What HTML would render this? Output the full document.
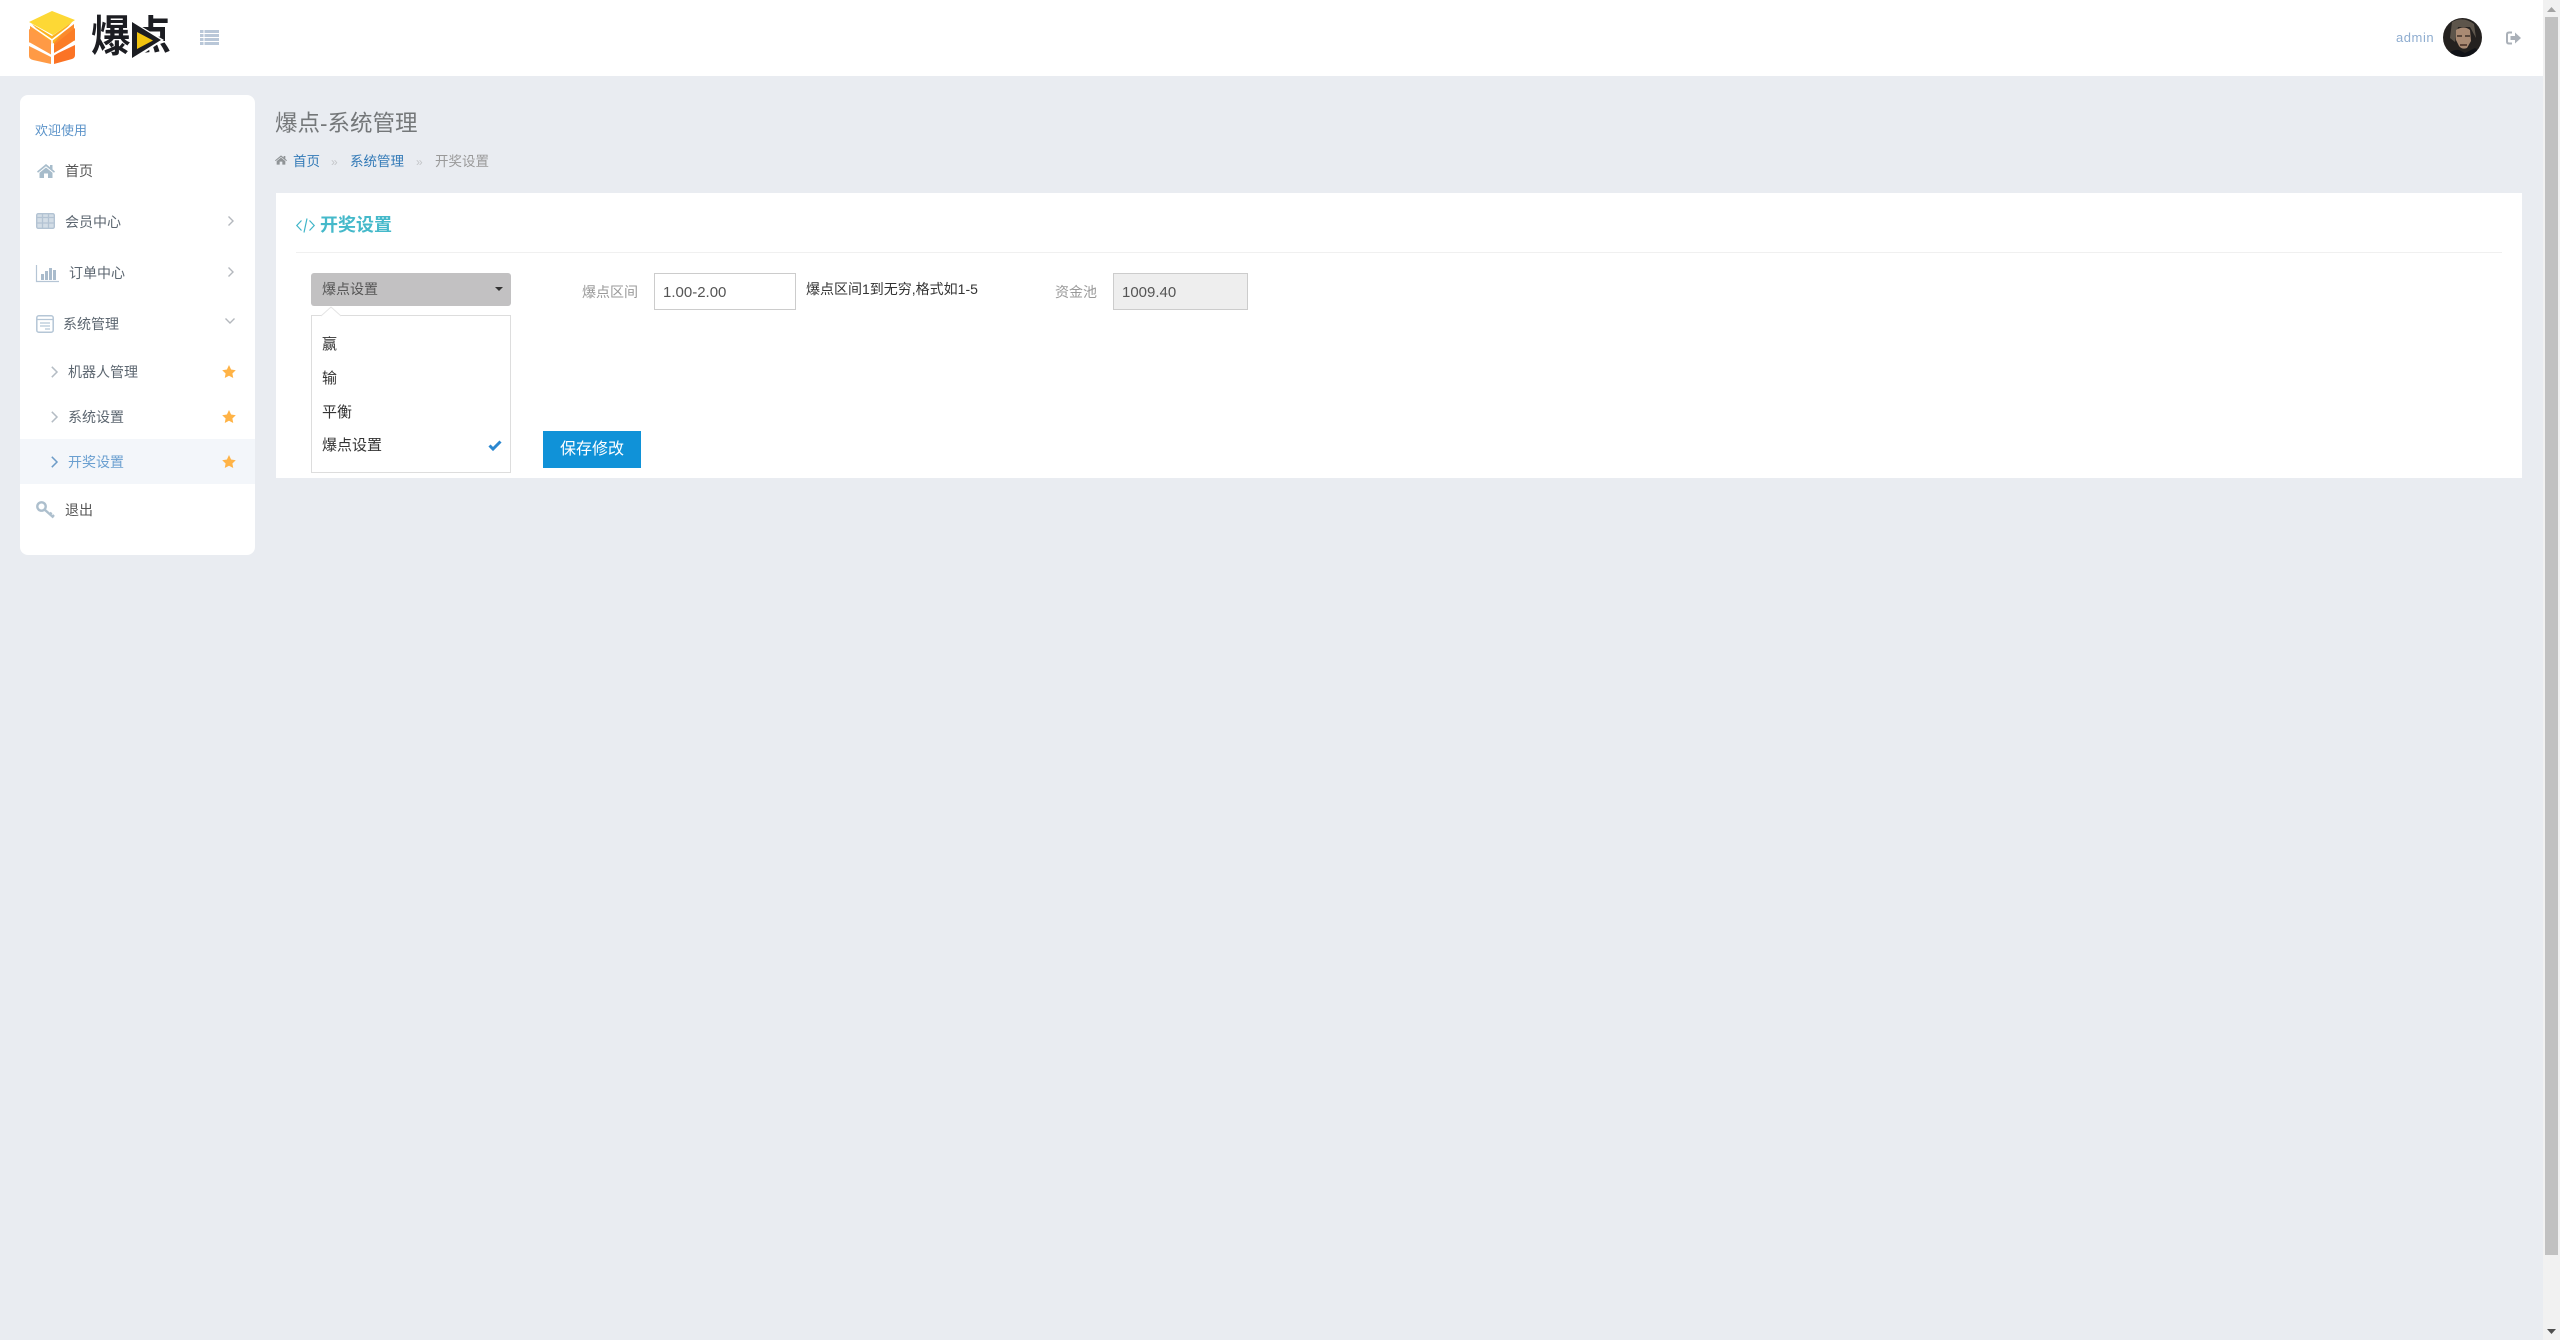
<!DOCTYPE html>
<html lang="zh"><head><meta charset="utf-8"><title>爆点-系统管理</title>
<style>
html,body{margin:0;padding:0;width:2560px;height:1340px;overflow:hidden;background:#e9ecf1;font-family:"Liberation Sans","Noto Sans CJK SC",sans-serif;color:#676a6c}
.a{position:absolute}
.t{position:absolute;white-space:nowrap;line-height:20px;font-size:14px}
svg{position:absolute;overflow:visible}
</style></head><body>
<!-- header -->
<div class="a" style="left:0;top:0;width:2543px;height:76px;background:#fff"></div>
<svg style="left:28px;top:10px" width="48" height="54" viewBox="0 0 48 54">
<path d="M1 12 24 1 47 10 25 25Z" fill="#fdd835"/>
<path d="M2 15 23 29V35L2 21Z" fill="#ff9d3c"/><path d="M46 13 26 27 26 35 46 21Z" fill="#fb8a2c"/>
<path d="M4 14 24 26 44 12 26 33 24 34 22 33Z" fill="#fcb41f"/>
<path d="M1 19 23 31V45L1 33Z" fill="#ff9a45"/><path d="M47 18 26 35V43L47 31Z" fill="#fb7d26"/>
<path d="M1 36 23 47V54L5 50Q1 49 1 46Z" fill="#ff9a45"/><path d="M47 35 26 45V54L44 49Q47 48 47 45Z" fill="#fb7325"/>
<path d="M2 15 24 30 46 13M24 30V54M1 33 24 46 47 31" fill="none" stroke="#fff" stroke-width="1.6"/>
</svg>
<span class="t" style="left:91px;top:14px;font-size:42px;line-height:44px;font-weight:700;color:#1c1d22;transform:scale(.94,1.04);transform-origin:left top">爆</span>
<span class="t" style="left:131px;top:13px;font-size:40px;line-height:46px;font-weight:700;color:#1c1d22">点</span>
<svg style="left:130px;top:14px" width="44" height="46" viewBox="0 0 44 46">
<path d="M0 8H4L34 26 4 46H0Z" fill="#fff"/>
<path d="M2 8 31 26 2 44Z" fill="#1c1d22"/>
<path d="M7 18 23 26.500 7 35Z" fill="#f2c40f"/>
</svg>
<svg style="left:200px;top:30px" width="19" height="15" viewBox="0 0 19 15"><g fill="#b9c7d8"><rect width="3.5" height="3"/><rect x="4.5" width="14.5" height="3"/><rect y="4" width="3.5" height="3"/><rect x="4.5" y="4" width="14.5" height="3"/><rect y="8" width="3.5" height="3"/><rect x="4.5" y="8" width="14.5" height="3"/><rect y="12" width="3.5" height="3"/><rect x="4.5" y="12" width="14.5" height="3"/></g></svg>
<span class="t" style="left:2396px;top:28px;font-size:13px;color:#8fadd0;letter-spacing:.55px">admin</span>
<svg style="left:2443px;top:18px" width="39" height="39" viewBox="0 0 39 39">
<defs><clipPath id="c"><circle cx="19.5" cy="19.5" r="19.5"/></clipPath></defs>
<g clip-path="url(#c)"><rect width="39" height="39" fill="#24211f"/>
<path d="M9 4Q20-2 31 6L33 20 27 9H15L12 24 7 20Z" fill="#5d554b"/>
<path d="M13 12Q21 7 27 12L28 23 24 30Q19 32 16 28L13 22Z" fill="#a98a73"/>
<path d="M14 18H19M22 18H27" stroke="#40332b" stroke-width="1.4"/>
<path d="M17 27H24" stroke="#5f4538" stroke-width="2"/>
<path d="M3 39Q8 31 16 32L22 35 32 30Q37 33 38 39Z" fill="#101217"/></g></svg>
<svg style="left:2506px;top:31px" width="15" height="14" viewBox="0 0 15 14"><path d="M6 1.500H3Q1 1.500 1 3.500V10.500Q1 12.500 3 12.500H6" fill="none" stroke="#aab0b8" stroke-width="2"/><path d="M4.500 5H9V1.500L15 7 9 12.500V9H4.500Z" fill="#aab0b8"/></svg>
<!-- scrollbar -->
<div class="a" style="left:2543px;top:0;width:17px;height:1340px;background:#f1f1f1"></div>
<div class="a" style="left:2545px;top:17px;width:13px;height:1238px;background:#c1c1c1"></div>
<svg style="left:2547px;top:7px" width="9" height="5"><path d="M0 5 4.500 0 9 5Z" fill="#a3a3a3"/></svg>
<svg style="left:2547px;top:1329px" width="9" height="5"><path d="M0 0 4.500 5 9 0Z" fill="#505050"/></svg>
<!-- sidebar -->
<div class="a" style="left:20px;top:95px;width:235px;height:460px;background:#fff;border-radius:8px"></div>
<div class="a" style="left:20px;top:439px;width:235px;height:45px;background:#f3f6fa"></div>
<span class="t" style="left:35px;top:121px;font-size:13px;color:#5b93c9">欢迎使用</span>
<svg style="left:37px;top:164px" width="18" height="14" viewBox="0 0 18 14"><path d="M9 0 13 3.300V1H15.500V5.400L18 7.500 17 8.700 9 2.300 1 8.700 0 7.500ZM9 3.500 15.500 8.700V14H11V9.500H7V14H2.500V8.700Z" fill="#a7bccb"/></svg>
<span class="t" style="left:65px;top:161px;color:#555">首页</span>
<svg style="left:36px;top:213px" width="19" height="16" viewBox="0 0 19 16"><rect x=".7" y=".7" width="17.600" height="14.600" rx="1.500" fill="#d3dde6" stroke="#b3c3d3" stroke-width="1.400"/><path d="M6.500 0V16M12.500 0V16M0 4.500H19M0 10H19" stroke="#b3c3d3" stroke-width="1.300"/></svg>
<span class="t" style="left:65px;top:212px;color:#5c6670">会员中心</span>
<svg style="left:228px;top:216px" width="6" height="10"><path d="M.5.500 5 5 .5 9.500" fill="none" stroke="#b4b8bd" stroke-width="1.400"/></svg>
<svg style="left:36px;top:265px" width="23" height="17" viewBox="0 0 23 17"><path d="M.5 0V16.500H23" fill="none" stroke="#b5c5d5" stroke-width="1.200"/><g fill="#a9bbcc"><rect x="5" y="9" width="3" height="6"/><rect x="9" y="6" width="3" height="9"/><rect x="13" y="3" width="3" height="12"/><rect x="17" y="5" width="3" height="10"/></g></svg>
<span class="t" style="left:69px;top:263px;color:#5c6670">订单中心</span>
<svg style="left:228px;top:267px" width="6" height="10"><path d="M.5.500 5 5 .5 9.500" fill="none" stroke="#b4b8bd" stroke-width="1.400"/></svg>
<svg style="left:36px;top:315px" width="18" height="18" viewBox="0 0 18 18"><rect x=".8" y=".8" width="16.400" height="16.400" rx="2" fill="#fff" stroke="#b5c6d6" stroke-width="1.500"/><path d="M1 4.500H17M4 8H14M4 11H14M9 14H14" stroke="#b5c6d6" stroke-width="1.300"/></svg>
<span class="t" style="left:63px;top:314px;color:#5c6670">系统管理</span>
<svg style="left:225px;top:318px" width="10" height="6"><path d="M.5.500 5 5 9.500.500" fill="none" stroke="#b4b8bd" stroke-width="1.400"/></svg>
<svg style="left:51px;top:366px" width="7" height="12"><path d="M.8.800 6 6 .8 11.200" fill="none" stroke="#b4bcc4" stroke-width="1.500"/></svg>
<span class="t" style="left:68px;top:362px;color:#5c6670">机器人管理</span>
<svg style="left:221.500px;top:365px" width="14" height="13" viewBox="0 0 24 23"><path d="M12 0 15.700 8 24 9.200 18 15 19.500 23 12 19 4.500 23 6 15 0 9.200 8.300 8Z" fill="#ffb346"/></svg>
<svg style="left:51px;top:411px" width="7" height="12"><path d="M.8.800 6 6 .8 11.200" fill="none" stroke="#b4bcc4" stroke-width="1.500"/></svg>
<span class="t" style="left:68px;top:407px;color:#5c6670">系统设置</span>
<svg style="left:221.500px;top:410px" width="14" height="13" viewBox="0 0 24 23"><path d="M12 0 15.700 8 24 9.200 18 15 19.500 23 12 19 4.500 23 6 15 0 9.200 8.300 8Z" fill="#ffb346"/></svg>
<svg style="left:51px;top:456px" width="7" height="12"><path d="M.8.800 6 6 .8 11.200" fill="none" stroke="#6d9cc8" stroke-width="1.500"/></svg>
<span class="t" style="left:68px;top:452px;color:#6a9fd0">开奖设置</span>
<svg style="left:221.500px;top:455px" width="14" height="13" viewBox="0 0 24 23"><path d="M12 0 15.700 8 24 9.200 18 15 19.500 23 12 19 4.500 23 6 15 0 9.200 8.300 8Z" fill="#ffb346"/></svg>
<svg style="left:36px;top:501px" width="19" height="18" viewBox="0 0 19 18"><circle cx="5.500" cy="5.500" r="4.200" fill="none" stroke="#adbfcd" stroke-width="2.400"/><path d="M8.500 8.500 17.500 16.500M14 13.500 15.500 11.500M16.500 15.500 18 14" stroke="#adbfcd" stroke-width="2.400" fill="none"/></svg>
<span class="t" style="left:65px;top:500px;color:#555">退出</span>
<!-- page heading -->
<span class="t" style="left:275px;top:109px;font-size:22.500px;line-height:30px;color:#747779">爆点-系统管理</span>
<svg style="left:275px;top:155px" width="12" height="10" viewBox="0 0 18 14"><path d="M9 0 13 3.300V1H15.500V5.400L18 7.500 17 8.700 9 2.300 1 8.700 0 7.500ZM9 3.500 15.500 8.700V14H11V9.500H7V14H2.500V8.700Z" fill="#8f9396"/></svg>
<span class="t" style="left:293px;top:152px;font-size:13.500px;color:#337ab7">首页</span>
<span class="t" style="left:331px;top:152px;font-size:12px;color:#c4c6c9">»</span>
<span class="t" style="left:350px;top:152px;font-size:13.500px;color:#337ab7">系统管理</span>
<span class="t" style="left:416px;top:152px;font-size:12px;color:#c4c6c9">»</span>
<span class="t" style="left:435px;top:152px;font-size:13.500px;color:#999">开奖设置</span>
<!-- panel -->
<div class="a" style="left:276px;top:193px;width:2246px;height:285px;background:#fff"></div>
<svg style="left:296px;top:218px" width="19" height="15" viewBox="0 0 19 15"><path d="M5.500 2.500.8 7.500 5.500 12.500M13.500 2.500 18.200 7.500 13.500 12.500M11 .5 8 14.500" fill="none" stroke="#3fb5c8" stroke-width="1.200"/></svg>
<span class="t" style="left:320px;top:215px;font-size:18px;font-weight:700;color:#45b9ca">开奖设置</span>
<div class="a" style="left:296px;top:252px;width:2206px;height:1px;background:#f0f0f0"></div>
<div class="a" style="left:311px;top:273px;width:200px;height:33px;background:#c2c1c2;border-radius:3px"></div>
<span class="t" style="left:322px;top:279px;color:#555">爆点设置</span>
<svg style="left:495px;top:287px" width="8" height="4"><path d="M0 0H8L4 4Z" fill="#333"/></svg>
<div class="a" style="left:311px;top:315px;width:198px;height:156px;background:#fff;border:1px solid #ddd"></div>
<svg style="left:321px;top:307px" width="20" height="10"><path d="M0 9 10 0 20 9" fill="#fff" stroke="#e4e4e4"/><rect x="1" y="8.500" width="18" height="2" fill="#fff"/></svg>
<span class="t" style="left:322px;top:335px;font-size:15px;color:#333">赢</span>
<span class="t" style="left:322px;top:369px;font-size:15px;color:#333">输</span>
<span class="t" style="left:322px;top:403px;font-size:15px;color:#333">平衡</span>
<span class="t" style="left:322px;top:436px;font-size:15px;color:#333">爆点设置</span>
<svg style="left:488px;top:440px" width="14" height="11" viewBox="0 0 14 11"><path d="M1.500 5.500 5 9 12.500 1.500" fill="none" stroke="#2b87d0" stroke-width="3"/></svg>
<span class="t" style="left:582px;top:282px;color:#999">爆点区间</span>
<div class="a" style="left:654px;top:273px;width:140px;height:35px;background:#fff;border:1px solid #ccc"></div>
<span class="t" style="left:663px;top:283px;font-size:15px;color:#555">1.00-2.00</span>
<span class="t" style="left:806px;top:279px;color:#333">爆点区间1到无穷,格式如1-5</span>
<span class="t" style="left:1055px;top:282px;color:#999">资金池</span>
<div class="a" style="left:1113px;top:273px;width:133px;height:35px;background:#eee;border:1px solid #ccc"></div>
<span class="t" style="left:1122px;top:283px;font-size:15px;color:#555">1009.40</span>
<div class="a" style="left:543px;top:431px;width:98px;height:37px;background:#1092d8"></div>
<span class="t" style="left:560px;top:440px;font-size:16px;color:#fff">保存修改</span>
</body></html>
